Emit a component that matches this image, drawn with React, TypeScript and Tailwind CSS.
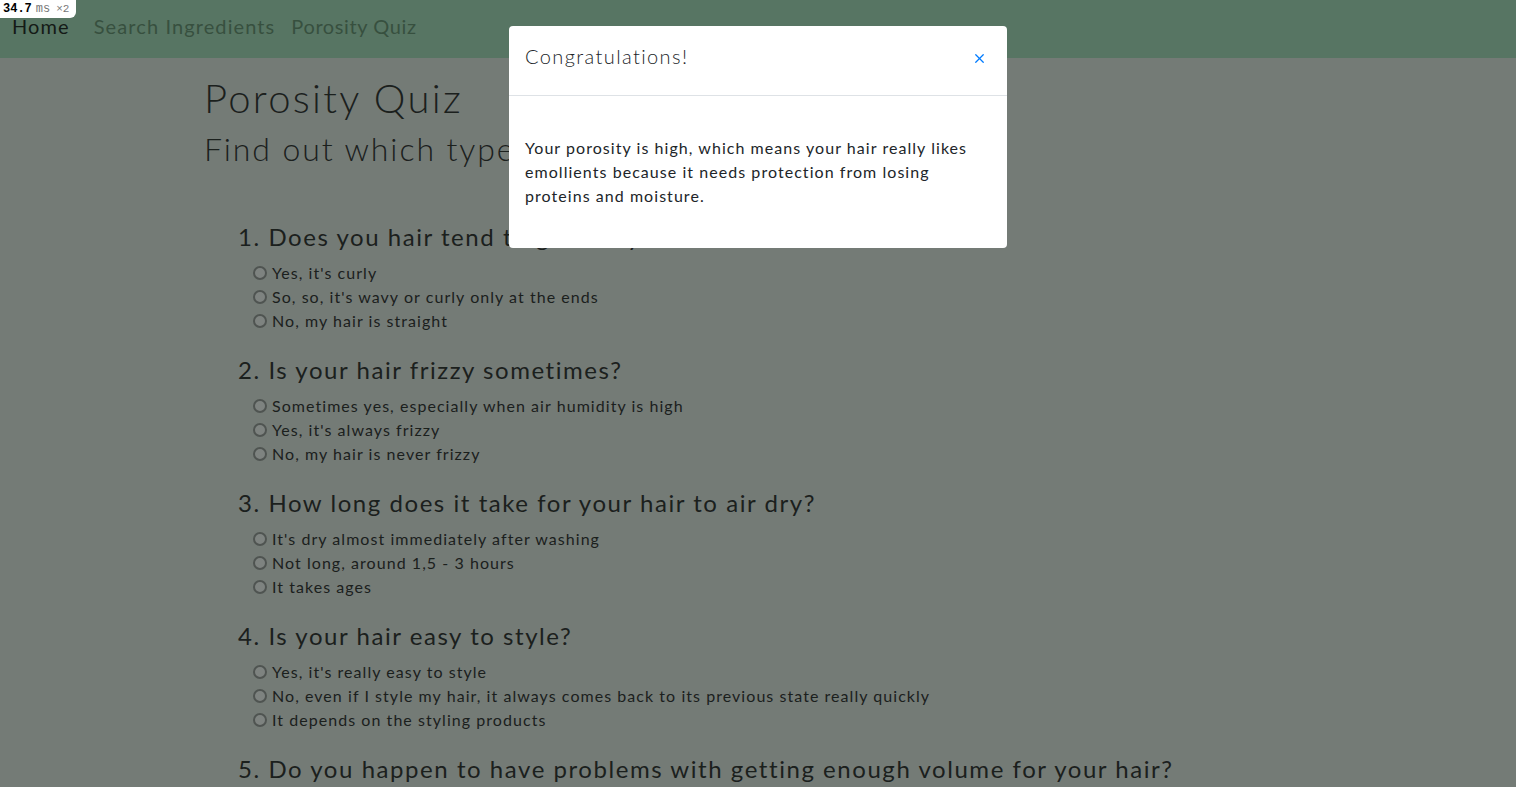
import { X } from "lucide-react";

const questions = [
  {
    q: "1. Does you hair tend to get curly?",
    options: ["Yes, it's curly", "So, so, it's wavy or curly only at the ends", "No, my hair is straight"],
  },
  {
    q: "2. Is your hair frizzy sometimes?",
    options: [
      "Sometimes yes, especially when air humidity is high",
      "Yes, it's always frizzy",
      "No, my hair is never frizzy",
    ],
  },
  {
    q: "3. How long does it take for your hair to air dry?",
    options: ["It's dry almost immediately after washing", "Not long, around 1,5 - 3 hours", "It takes ages"],
  },
  {
    q: "4. Is your hair easy to style?",
    options: [
      "Yes, it's really easy to style",
      "No, even if I style my hair, it always comes back to its previous state really quickly",
      "It depends on the styling products",
    ],
  },
  {
    q: "5. Do you happen to have problems with getting enough volume for your hair?",
    options: ["Yes, always", "Sometimes", "Never"],
  },
];

const font = { fontFamily: "Lato, 'Noto Sans', sans-serif" };

function Radio() {
  return <span className="inline-block w-[14px] h-[14px] rounded-full border-2 border-[#4f5451] bg-[#7e8380] mr-[5px] shrink-0" />;
}

export default function App() {
  return (
    <div className="relative h-[787px] overflow-hidden bg-[#747b76] text-[#1b201d]" style={font}>
      {/* perf badge */}
      <div className="absolute left-0 top-0 z-20 h-[18px] w-[76px] bg-white rounded-br-[6px] flex items-center pl-[3px] text-[12px] font-mono leading-none">
        <span className="font-bold text-black">34.7</span>
        <span className="ml-[4px] text-[#777] text-[12px]">ms</span>
        <span className="ml-[6px] text-[#777] text-[11px]">×2</span>
      </div>

      <nav className="h-[58px] bg-[#577563] flex items-start pt-[11px] pl-[12px] gap-[24px] text-[20px] tracking-[1.1px]">
        <span className="text-[#141a16]">Home</span>
        <div className="flex gap-[16px] text-[#37503f]">
          <span>Search Ingredients</span>
          <span className="tracking-[0.6px]">Porosity Quiz</span>
        </div>
      </nav>

      <main className="pl-[204px] pt-[16px]">
        <h1 className="text-[40px] leading-[48px] font-light tracking-[2.3px]">Porosity Quiz</h1>
        <h2 className="text-[32px] leading-[40px] font-light tracking-[1.9px] mt-[7px]">
          Find out which type of hair porosity you have
        </h2>
        <div className="pl-[34px] mt-[53px] flex flex-col gap-[22px]">
          {questions.map((item) => (
            <section key={item.q}>
              <h3 className="text-[24px] leading-[30px] tracking-[1.55px] font-normal">{item.q}</h3>
              <ul className="pl-[15px] mt-[9px] text-[16px] leading-[24px] tracking-[1.05px]">
                {item.options.map((o) => (
                  <li key={o} className="flex items-center">
                    <Radio />
                    {o}
                  </li>
                ))}
              </ul>
            </section>
          ))}
        </div>
      </main>

      {/* modal */}
      <div className="absolute left-[509px] top-[26px] z-10 w-[498px] bg-white rounded-[4px] text-[#212529]">
        <div className="h-[70px] flex items-start justify-between px-[16px] pt-[15px] border-b border-[#dee2e6]">
          <span className="text-[20px] leading-[30px] font-light tracking-[1.4px]">Congratulations!</span>
          <X className="w-[15px] h-[15px] text-[#007bff] mr-[4px] mt-[10px]" strokeWidth={2} />
        </div>
        <div className="px-[16px] pt-[40px] pb-[40px] text-[16px] leading-[24px] tracking-[1.05px]">
          Your porosity is high, which means your hair really likes emollients because it needs protection from
          losing proteins and moisture.
        </div>
      </div>
    </div>
  );
}
